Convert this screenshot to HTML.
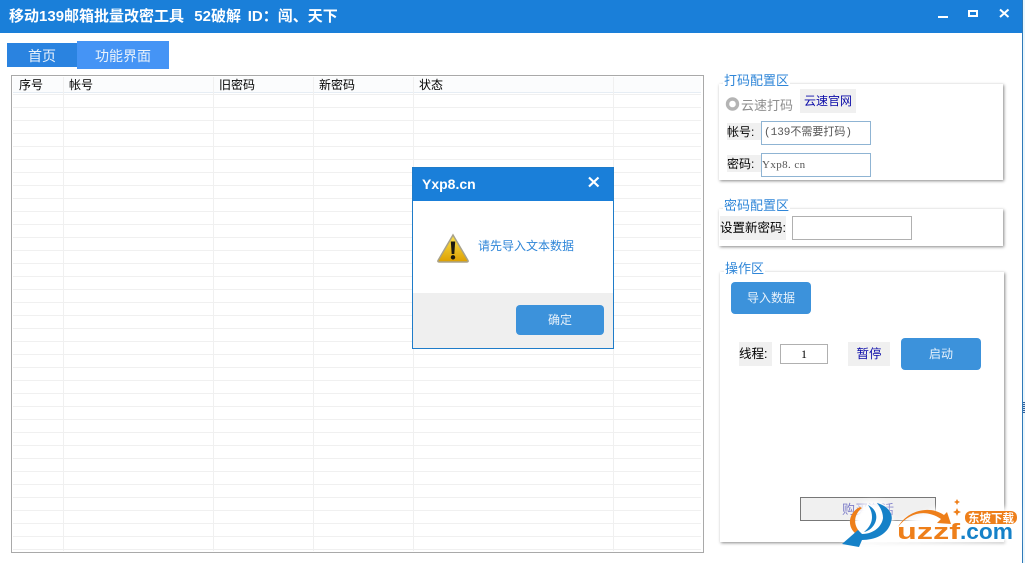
<!DOCTYPE html>
<html><head><meta charset="utf-8"><style>
html,body{margin:0;padding:0;background:#fff}
#p{position:relative;width:1025px;height:563px;overflow:hidden;background:#fff;font-family:"Liberation Sans","WenQuanYi Zen Hei","Noto Sans CJK SC",sans-serif;font-size:13px;color:#000}
#p div{position:absolute;white-space:nowrap}
.cn{font-family:"WenQuanYi Zen Hei","Noto Sans CJK SC",sans-serif}
.panel{background:#fff;box-shadow:1px 1px 3px #888}
.lg{color:#2f86d8;background:#fff;font-size:13px;line-height:14px;padding:0 1px}
.btn{background:#3c92db;border-radius:4px;color:#e8f2fb;text-align:center;font-size:12px}
.lb{background:#f0f0f0;line-height:24px}
.in{box-sizing:border-box;background:#fff;line-height:22px}
</style></head><body><div id="p">
<!-- title -->
<div style="left:0;top:0;width:1022px;height:33px;background:#1a7fd9"></div>
<div class="cn" style="left:9px;top:7px;color:#fff;font-size:15px;font-weight:bold;line-height:18px">移动<span style="font-family:'Liberation Sans'">139</span>邮箱批量改密工具&nbsp;&nbsp;&nbsp;<span style="font-family:'Liberation Sans'">52</span>破解&nbsp;&nbsp;<span style="font-family:'Liberation Sans'">ID</span>：闯、天下</div>
<svg style="position:absolute;left:930px;top:0" width="95" height="33"><g fill="none" stroke="#fff" stroke-width="2"><path d="M8 17H18"/><rect x="39" y="11" width="8" height="5"/><path d="M70 9.5L78.500 17M78.500 9.500L70 17"/></g></svg>
<div style="left:1022px;top:0;width:1px;height:563px;background:#2f79b8"></div>
<div style="left:1023px;top:0;width:2px;height:563px;background:#eaf6fc"></div>
<div style="left:1023px;top:402px;width:2px;height:11px;background:repeating-linear-gradient(#2f5f9a 0 1px,#d5e5f2 1px 2px)"></div>
<!-- tabs -->
<div style="left:7px;top:43px;width:70px;height:24px;background:#2a83e0;color:#e9f2fb;text-align:center;line-height:26px;font-size:14px">首页</div>
<div style="left:77px;top:41px;width:92px;height:28px;background:#4594f5;color:#e9f2fb;text-align:center;line-height:30px;font-size:14px">功能界面</div>
<!-- table -->
<div style="left:11px;top:75px;width:691px;height:476px;border:1px solid #a9a9a9;background:#fff;overflow:hidden">
<svg style="position:absolute;left:-12px;top:-76px" width="720" height="560">
<rect x="13" y="77" width="688" height="15" fill="#fbfcfd"/>
<path d="M13 92.500H701" stroke="#e6edf4" stroke-width="1"/>
<g stroke="#f0f0f0" stroke-width="1">
<path d="M13 94.500H701M13 107.500H701M13 120.500H701M13 133.500H701M13 146.500H701M13 159.500H701M13 172.500H701M13 185.500H701M13 198.500H701M13 211.500H701M13 224.500H701M13 237.500H701M13 250.500H701M13 263.500H701M13 276.500H701M13 289.500H701M13 302.500H701M13 315.500H701M13 328.500H701M13 341.500H701M13 354.500H701M13 367.500H701M13 380.500H701M13 393.500H701M13 406.500H701M13 419.500H701M13 432.500H701M13 445.500H701M13 458.500H701M13 471.500H701M13 484.500H701M13 497.500H701M13 510.500H701M13 523.500H701M13 536.500H701M13 549.500H701"/>
<path d="M63.500 77V551M213.500 77V551M313.500 77V551M413.500 77V551M613.500 77V551"/>
</g></svg>
</div>
<div style="left:19px;top:78px;line-height:15px;font-size:12px">序号</div>
<div style="left:69px;top:78px;line-height:15px;font-size:12px">帐号</div>
<div style="left:219px;top:78px;line-height:15px;font-size:12px">旧密码</div>
<div style="left:319px;top:78px;line-height:15px;font-size:12px">新密码</div>
<div style="left:419px;top:78px;line-height:15px;font-size:12px">状态</div>
<!-- panel 1 -->
<div class="panel" style="left:719px;top:84px;width:284px;height:96px"></div>
<div class="lg" style="left:723px;top:74px">打码配置区</div>
<svg style="position:absolute;left:725px;top:96px" width="16" height="16"><circle cx="7.500" cy="8" r="5" fill="#fff" stroke="#b4b4b4" stroke-width="3.400"/></svg>
<div style="left:741px;top:98px;color:#8e8e8e;line-height:16px">云速打码</div>
<div style="left:800px;top:89px;width:56px;height:24px;background:#f0f0f0;color:#0a0aa8;text-align:center;font-size:12px;line-height:24px">云速官网</div>
<div class="lb" style="left:727px;top:123px;width:34px;height:17px;line-height:19px;font-size:12px">帐号:</div>
<div class="in" style="left:761px;top:121px;width:110px;height:24px;border:1px solid #8fb4d3;color:#555;font-family:'Liberation Mono','WenQuanYi Zen Hei',monospace;font-size:11px;padding-left:2px;line-height:23px">(139不需要打码)</div>
<div class="lb" style="left:727px;top:155px;width:34px;height:17px;line-height:19px;font-size:12px">密码:</div>
<div class="in" style="left:761px;top:153px;width:110px;height:24px;border:1px solid #8fb4d3;color:#555;font-family:'Liberation Serif',serif;font-size:11px;padding-left:0;letter-spacing:.4px">Yxp8. cn</div>
<!-- panel 2 -->
<div class="panel" style="left:719px;top:209px;width:284px;height:37px"></div>
<div class="lg" style="left:723px;top:199px">密码配置区</div>
<div class="lb" style="left:720px;top:216px;width:66px;height:24px;font-size:12.500px">设置新密码:</div>
<div class="in" style="left:792px;top:216px;width:120px;height:24px;border:1px solid #b0b0b0"></div>
<!-- panel 3 -->
<div class="panel" style="left:720px;top:272px;width:284px;height:270px"></div>
<div class="lg" style="left:724px;top:262px">操作区</div>
<div class="btn" style="left:731px;top:282px;width:80px;height:32px;line-height:33px">导入数据</div>
<div class="lb" style="left:739px;top:342px;width:33px;height:24px;font-size:12.500px">线程:</div>
<div class="in" style="left:780px;top:344px;width:48px;height:20px;border:1px solid #b0b0b0;text-align:center;line-height:18px;font-family:'Liberation Serif',serif;font-size:12px">1</div>
<div style="left:848px;top:342px;width:42px;height:24px;background:#f0f0f0;color:#0a0aa8;text-align:center;line-height:24px;font-size:12.500px">暂停</div>
<div class="btn" style="left:901px;top:338px;width:80px;height:32px;line-height:33px">启动</div>
<div style="left:800px;top:497px;width:134px;height:22px;background:#f0f0f0;border:1px solid #777;color:#7c7cc8;text-align:center;line-height:23px">购买激活</div>
<!-- watermark -->
<svg style="position:absolute;left:838px;top:495px" width="185" height="60" viewBox="0 -5 185 60">
<defs><filter id="b" x="-20%" y="-40%" width="140%" height="180%"><feGaussianBlur stdDeviation="3"/></filter></defs>
<path d="M6 48L20 8Q30 -3 48 4L56 24L62 22L100 8L180 8L180 42L60 46Z" fill="#fff" filter="url(#b)"/>
<path d="M22 7C11 12 8 26 18 34L21 31C15 24 16 14 24 8Z" fill="#ee7f1a"/>
<path d="M39 3C50 6 56 14 53 22C50 34 38 40 24 40L21 47L4 44L20 30L24 34C36 34 44 26 45 18C45 12 42 7 39 3Z" fill="#1581c8"/>
<path d="M30 5C38 9 40 16 37 23C34 29 30 31 26 32C32 27 34 22 34 17C34 12 32 8 30 5Z" fill="#1581c8"/>
<path d="M60 27C68 12 90 4 106 15L109 12L113 24L99 23L103 19C88 9 72 12 60 27Z" fill="#ee7f1a"/>
<path d="M119 8l1.200 2.800 2.800 1.200-2.800 1.200-1.200 2.800-1.200-2.800-2.800-1.200 2.800-1.200zM119 -1l1 2 2 1-2 1-1 2-1-2-2-1 2-1z" fill="#ee7f1a"/>
<rect x="127" y="11" width="52" height="13" rx="6" fill="#ee7f1a"/>
<text x="130" y="22" font-size="11.500" font-weight="bold" fill="#fff" font-family="'WenQuanYi Zen Hei','Noto Sans CJK SC',sans-serif" textLength="46">东坡下载</text>
<text x="59" y="39" font-size="22" font-weight="bold" fill="#ee7f1a" font-family="'Liberation Sans',sans-serif" textLength="63" lengthAdjust="spacingAndGlyphs">uzzf</text>
<text x="122" y="39" font-size="22" font-weight="bold" fill="#1581c8" font-family="'Liberation Sans',sans-serif" textLength="53" lengthAdjust="spacingAndGlyphs">.com</text>
</svg>
<!-- dialog -->
<div style="left:412px;top:167px;width:200px;height:180px;border:1px solid #1f7cc9;background:#fff"></div>
<div style="left:413px;top:168px;width:200px;height:33px;background:#1a7fd9;color:#fff;font-weight:bold;font-size:14px;line-height:32px;text-indent:9px">Yxp8.cn</div>
<svg style="position:absolute;left:586px;top:174px" width="16" height="16"><path d="M3 3.500L12.500 12.500M12.500 3.500L3 12.500" stroke="#fff" stroke-width="2.200" fill="none"/></svg>
<svg style="position:absolute;left:436px;top:232px" width="34" height="32">
<defs><linearGradient id="w" x1="0" y1="0" x2="0" y2="1"><stop offset="0" stop-color="#fbe24e"/><stop offset="1" stop-color="#dd9f00"/></linearGradient></defs>
<path d="M17 3L32 28.500Q32.500 30 31 30H3Q1.500 30 2 28.500Z" fill="url(#w)" stroke="#a8a28a" stroke-width="1.500"/>
<path d="M14.800 9.500H19.200L18.300 22H15.700Z" fill="#1d1a10"/><circle cx="17" cy="25.300" r="2.200" fill="#1d1a10"/>
</svg>
<div style="left:478px;top:238px;color:#2f86d8;font-size:12px;line-height:16px">请先导入文本数据</div>
<div style="left:413px;top:293px;width:200px;height:55px;background:#efefef"></div>
<div class="btn" style="left:516px;top:305px;width:88px;height:30px;line-height:30px">确定</div>
</div></body></html>
